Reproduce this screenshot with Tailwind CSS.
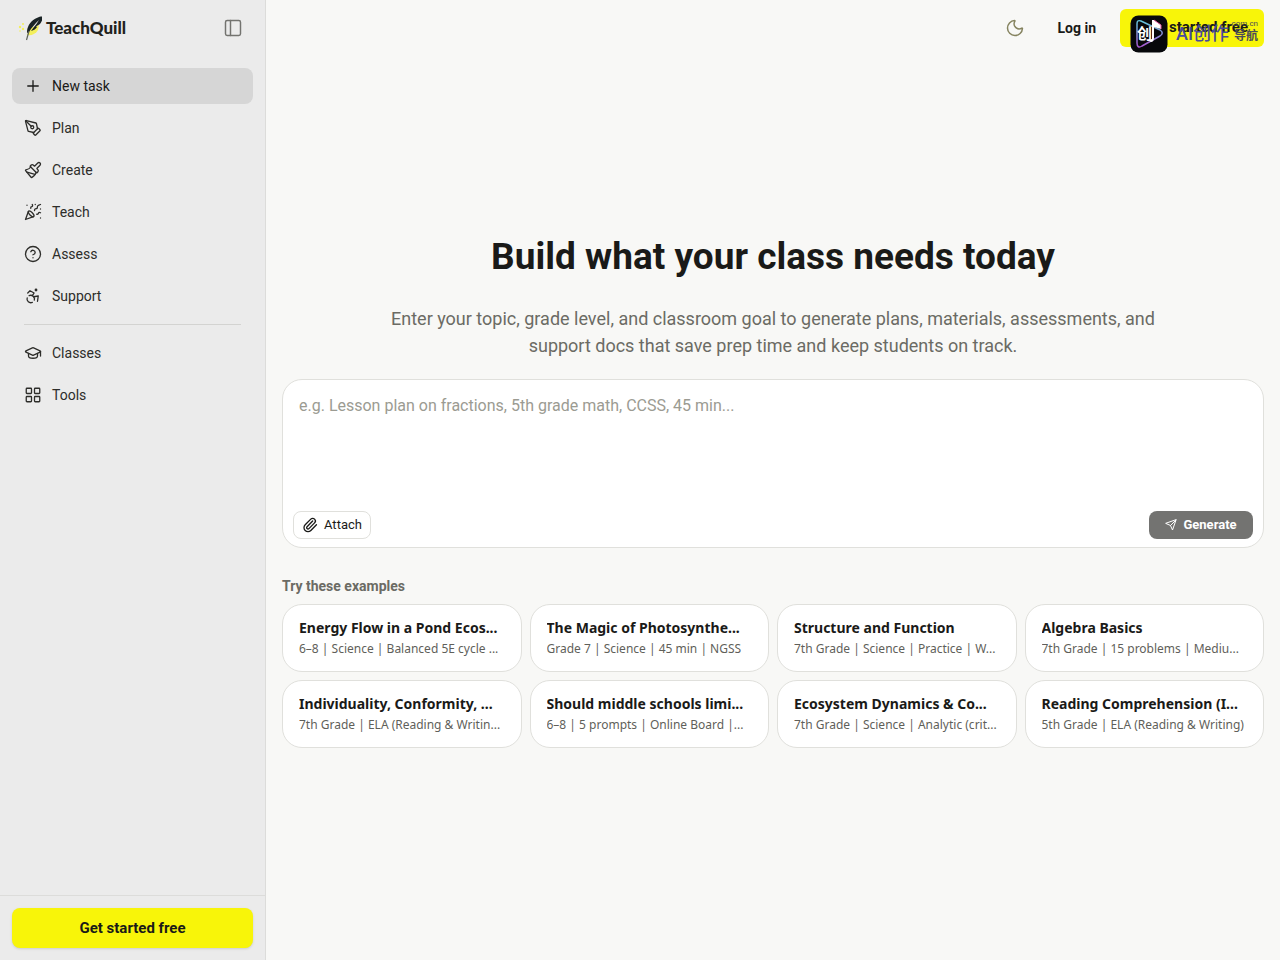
<!DOCTYPE html>
<html lang="en">
<head>
  <meta charset="UTF-8">
  <meta name="viewport" content="width=device-width, initial-scale=1.0">
  <title>TeachQuill</title>
  <script src="https://cdn.jsdelivr.net/npm/@tailwindcss/browser@4"></script>
</head>
<body class="flex min-h-screen bg-[#f8f8f6] font-[Roboto,'Noto_Sans_CJK_SC',sans-serif] text-[#1a1a18]">

  <!-- Sidebar -->
  <aside class="flex w-[266px] shrink-0 flex-col border-r border-[#dcdcda] bg-[#ebebeb]">
    <div class="flex h-14 items-center justify-between pl-4 pr-[22px]">
      <a href="#" class="flex items-center gap-1 font-[Lato,sans-serif] text-[17px] font-black text-[#22221c]">
        <svg class="h-7 w-[26px]" viewBox="0 0 26 28">
          <g fill="#f3ef5c">
            <circle cx="4" cy="13" r="1.2"/><circle cx="7" cy="10" r="1"/><circle cx="7" cy="15" r="1.2"/><circle cx="4" cy="17" r=".8"/>
            <path d="M11 21c4 1 9-1 11-5l1-5-9 3z"/>
          </g>
          <path d="M27 2c-7 1-13 5-15 11-1 2-1 4-1 6l2-1c3-5 6-8 10-12-3 5-6 8-8 11 3-1 5-2 6-4l-1-.5 4-2.500c2-3 3-5 3-8z" fill="#1b2426"/>
          <path d="M13 17l-2.500 9" fill="none" stroke="#5c6258" stroke-width="1.200"/>
        </svg>
        TeachQuill
      </a>
      <button type="button" aria-label="Toggle sidebar" class="text-[#73736f]">
        <svg class="size-5" viewBox="0 0 24 24" fill="none" stroke="currentColor" stroke-width="1.75" stroke-linecap="round" stroke-linejoin="round"><rect width="18" height="18" x="3" y="3" rx="2"/><path d="M9 3v18"/></svg>
      </button>
    </div>

    <nav class="flex flex-1 flex-col gap-1.5 px-3 pt-3 text-sm text-[#2d2d2a]">
      <a href="#" class="flex h-9 items-center gap-2.5 rounded-lg bg-[#d6d6d6] px-3 text-[#1a1a18]">
        <svg class="size-[18px]" viewBox="0 0 24 24" fill="none" stroke="currentColor" stroke-width="1.75" stroke-linecap="round" stroke-linejoin="round"><path d="M5 12h14M12 5v14"/></svg>
        New task
      </a>
      <a href="#" class="flex h-9 items-center gap-2.5 rounded-lg px-3">
        <svg class="size-[18px]" viewBox="0 0 24 24" fill="none" stroke="currentColor" stroke-width="1.75" stroke-linecap="round" stroke-linejoin="round"><path d="M15.707 21.293a1 1 0 0 1-1.414 0l-1.586-1.586a1 1 0 0 1 0-1.414l5.586-5.586a1 1 0 0 1 1.414 0l1.586 1.586a1 1 0 0 1 0 1.414z"/><path d="m18 13-1.375-6.874a1 1 0 0 0-.746-.776L3.235 2.028a1 1 0 0 0-1.207 1.207L5.350 15.879a1 1 0 0 0 .776.746L13 18"/><path d="m2.300 2.300 7.286 7.286"/><circle cx="11" cy="11" r="2"/></svg>
        Plan
      </a>
      <a href="#" class="flex h-9 items-center gap-2.5 rounded-lg px-3">
        <svg class="size-[18px]" viewBox="0 0 24 24" fill="none" stroke="currentColor" stroke-width="1.75" stroke-linecap="round" stroke-linejoin="round"><path d="m14.622 17.897-10.680-2.913"/><path d="M18.376 2.622a1 1 0 1 1 3.002 3.002L17.360 9.643a.5.5 0 0 0 0 .707l.944.944a2.410 2.410 0 0 1 0 3.408l-.944.944a.5.5 0 0 1-.707 0L8.354 7.348a.5.5 0 0 1 0-.707l.944-.944a2.410 2.410 0 0 1 3.408 0l.944.944a.5.5 0 0 0 .707 0z"/><path d="M9 8c-1.804 2.710-3.970 3.460-6.583 3.948a.507.507 0 0 0-.302.819l7.320 8.883a1 1 0 0 0 1.185.204C12.735 20.405 16 16.792 16 15"/></svg>
        Create
      </a>
      <a href="#" class="flex h-9 items-center gap-2.5 rounded-lg px-3">
        <svg class="size-[18px]" viewBox="0 0 24 24" fill="none" stroke="currentColor" stroke-width="1.75" stroke-linecap="round" stroke-linejoin="round"><path d="M5.800 11.300 2 22l10.700-3.790"/><path d="M4 3h.01M22 8h.01M15 2h.01M22 20h.01"/><path d="m22 2-2.240.75a2.900 2.900 0 0 0-1.960 3.120c.1.860-.57 1.630-1.450 1.630h-.38c-.86 0-1.600.6-1.760 1.440L14 10"/><path d="m22 13-.82-.33c-.86-.34-1.820.2-1.980 1.110c-.11.7-.72 1.220-1.430 1.220H17"/><path d="m11 2 .33.82c.34.86-.2 1.820-1.110 1.980C9.520 4.900 9 5.520 9 6.230V7"/><path d="M11 13c1.930 1.930 2.830 4.170 2 5-.83.83-3.070-.07-5-2-1.930-1.930-2.830-4.170-2-5 .83-.83 3.070.07 5 2Z"/></svg>
        Teach
      </a>
      <a href="#" class="flex h-9 items-center gap-2.5 rounded-lg px-3">
        <svg class="size-[18px]" viewBox="0 0 24 24" fill="none" stroke="currentColor" stroke-width="1.75" stroke-linecap="round" stroke-linejoin="round"><circle cx="12" cy="12" r="10"/><path d="M9.090 9a3 3 0 0 1 5.830 1c0 2-3 3-3 3"/><path d="M12 17h.01"/></svg>
        Assess
      </a>
      <a href="#" class="flex h-9 items-center gap-2.5 rounded-lg px-3">
        <svg class="size-[18px]" viewBox="0 0 24 24" fill="none" stroke="currentColor" stroke-width="1.75" stroke-linecap="round" stroke-linejoin="round"><circle cx="16" cy="4" r="1"/><path d="m18 19 1-7-6 1"/><path d="m5 8 3-3 5.500 3-2.360 3.500"/><path d="M4.240 14.500a5 5 0 0 0 6.880 6"/><path d="M13.760 17.500a5 5 0 0 0-6.880-6"/></svg>
        Support
      </a>
      <hr class="mx-3 my-1 border-[#d3d3d1]">
      <a href="#" class="flex h-9 items-center gap-2.5 rounded-lg px-3">
        <svg class="size-[18px]" viewBox="0 0 24 24" fill="none" stroke="currentColor" stroke-width="1.75" stroke-linecap="round" stroke-linejoin="round"><path d="M21.420 10.922a1 1 0 0 0-.019-1.838L12.830 5.180a2 2 0 0 0-1.660 0L2.600 9.080a1 1 0 0 0 0 1.832l8.570 3.908a2 2 0 0 0 1.660 0z"/><path d="M22 10v6"/><path d="M6 12.500V16a6 3 0 0 0 12 0v-3.500"/></svg>
        Classes
      </a>
      <a href="#" class="flex h-9 items-center gap-2.5 rounded-lg px-3">
        <svg class="size-[18px]" viewBox="0 0 24 24" fill="none" stroke="currentColor" stroke-width="1.75" stroke-linecap="round" stroke-linejoin="round"><rect width="7" height="7" x="3" y="3" rx="1"/><rect width="7" height="7" x="14" y="3" rx="1"/><rect width="7" height="7" x="14" y="14" rx="1"/><rect width="7" height="7" x="3" y="14" rx="1"/></svg>
        Tools
      </a>
    </nav>

    <div class="border-t border-[#dcdcda] p-3">
      <button type="button" class="h-10 w-full rounded-lg bg-[#f8f509] text-[15px] font-bold shadow-sm">Get started free</button>
    </div>
  </aside>

  <div class="flex min-w-0 flex-1 flex-col">
    <!-- Top bar -->
    <header class="flex h-14 items-center justify-end pr-4 text-sm font-bold">
      <button type="button" aria-label="Dark mode" class="mr-2 p-2 text-[#85835f]">
        <svg class="size-5" viewBox="0 0 24 24" fill="none" stroke="currentColor" stroke-width="1.75" stroke-linecap="round" stroke-linejoin="round"><path d="M20.985 12.486a9 9 0 1 1-9.473-9.472c.405-.022.617.46.402.803a6 6 0 0 0 8.268 8.268c.344-.215.825-.004.803.401"/></svg>
      </button>
      <a href="#" class="mr-2 px-4">Log in</a>
      <div class="relative">
        <button type="button" class="h-[38px] w-36 rounded-md bg-[#f8f509] pr-4 text-right text-[15px]">Get started free</button>
        <!-- Site badge over the button -->
        <div class="absolute top-1.5 left-2.5 flex items-center gap-2">
          <svg class="size-[38px]" viewBox="0 0 38 38">
            <defs>
              <linearGradient id="play" x1="0" y1="0" x2="0" y2="1"><stop offset="0" stop-color="#63c8dc"/><stop offset="1" stop-color="#a957cf"/></linearGradient>
            </defs>
            <rect width="37" height="37" x=".5" y=".5" rx="8" fill="#07080b"/>
            <path d="M11 6c-3-1-4 0-4 3v19c0 4 2 5 5 3l18-10c3-2 3-4 0-6z" fill="none" stroke="url(#play)" stroke-width="1.500"/>
            <text x="7" y="24" font-size="15" font-weight="700" fill="#fff" font-family="Noto Sans CJK SC, sans-serif">创</text>
            <path d="M22 5v19c-3 0-3 3-1 3 2 0 3-2 3-4V12l7 2v-4l-7-5z" fill="#fff"/>
            <path d="M24 5l7 5v4" fill="none" stroke="#e0569f" stroke-width="1"/>
          </svg>
          <span class="text-lg leading-5 font-medium whitespace-nowrap text-[#4a4c9a]">AI创作</span>
        </div>
        <div class="absolute top-2.5 right-1.5 flex flex-col items-end text-[#4b4b58]">
          <span class="text-[8px] leading-[10px] font-normal">com.cn</span>
          <span class="text-xs leading-[14px]">导航</span>
        </div>
      </div>
    </header>

    <main class="flex flex-1 flex-col justify-center px-4 pb-14">
      <h1 class="pt-[22px] text-center text-[37px] leading-[44px] font-bold">Build what your class needs today</h1>
      <p class="mx-auto mt-[26px] max-w-[800px] text-center text-lg leading-[27px] text-[#6b6b64]">Enter your topic, grade level, and classroom goal to generate plans, materials, assessments, and support docs that save prep time and keep students on track.</p>

      <form class="mt-5 rounded-[20px] border border-[#e0e0dc] bg-white pb-2">
        <textarea aria-label="Lesson request" placeholder="e.g. Lesson plan on fractions, 5th grade math, CCSS, 45 min..." class="block h-[131px] w-full resize-none bg-transparent px-4 pt-3.5 text-base outline-none placeholder:text-[#9b9b92]"></textarea>
        <div class="flex items-center justify-between px-2.5 text-xs">
          <button type="button" class="flex h-7 items-center gap-1.5 rounded-lg border border-[#e0e0dc] px-2 text-[13px]">
            <svg class="size-4" viewBox="0 0 24 24" fill="none" stroke="currentColor" stroke-width="2" stroke-linecap="round" stroke-linejoin="round"><path d="m16 6-8.414 8.586a2 2 0 0 0 2.829 2.829l8.414-8.586a4 4 0 1 0-5.657-5.657l-8.379 8.551a6 6 0 1 0 8.485 8.485l8.379-8.551"/></svg>
            Attach
          </button>
          <button type="submit" class="flex h-7 w-26 items-center justify-center gap-1.5 rounded-lg bg-[#737371] text-[13px] font-bold text-white">
            <svg class="size-3" viewBox="0 0 24 24" fill="none" stroke="currentColor" stroke-width="2" stroke-linecap="round" stroke-linejoin="round"><path d="M22 2 15 22l-4-9-9-4zM22 2 11 13"/></svg>
            Generate
          </button>
        </div>
      </form>

      <h2 class="mt-7 mb-2 text-sm leading-5 font-bold text-[#6b6b64]">Try these examples</h2>
      <div id="examples" class="grid grid-cols-4 gap-2 font-['Noto_Sans',sans-serif]"></div>
    </main>
  </div>

  <script>
    const examples = [
      ["Energy Flow in a Pond Ecos...", "6–8 | Science | Balanced 5E cycle ..."],
      ["The Magic of Photosynthe...", "Grade 7 | Science | 45 min | NGSS"],
      ["Structure and Function", "7th Grade | Science | Practice | W..."],
      ["Algebra Basics", "7th Grade | 15 problems | Mediu..."],
      ["Individuality, Conformity, ...", "7th Grade | ELA (Reading & Writin..."],
      ["Should middle schools limi...", "6–8 | 5 prompts | Online Board |..."],
      ["Ecosystem Dynamics & Co...", "7th Grade | Science | Analytic (crit..."],
      ["Reading Comprehension (I...", "5th Grade | ELA (Reading & Writing)"],
    ];

    const grid = document.getElementById("examples");
    for (const [title, details] of examples) {
      const card = document.createElement("button");
      card.type = "button";
      card.className = "min-w-0 rounded-[20px] border border-[#e0e0dc] bg-white px-4 py-3 text-left";

      const heading = document.createElement("span");
      heading.className = "block truncate text-sm leading-[22px] font-bold";
      heading.textContent = title;

      const info = document.createElement("span");
      info.className = "block truncate text-xs leading-5 text-[#5f5f5a]";
      info.textContent = details;

      card.append(heading, info);
      grid.appendChild(card);
    }
  </script>
</body>
</html>
